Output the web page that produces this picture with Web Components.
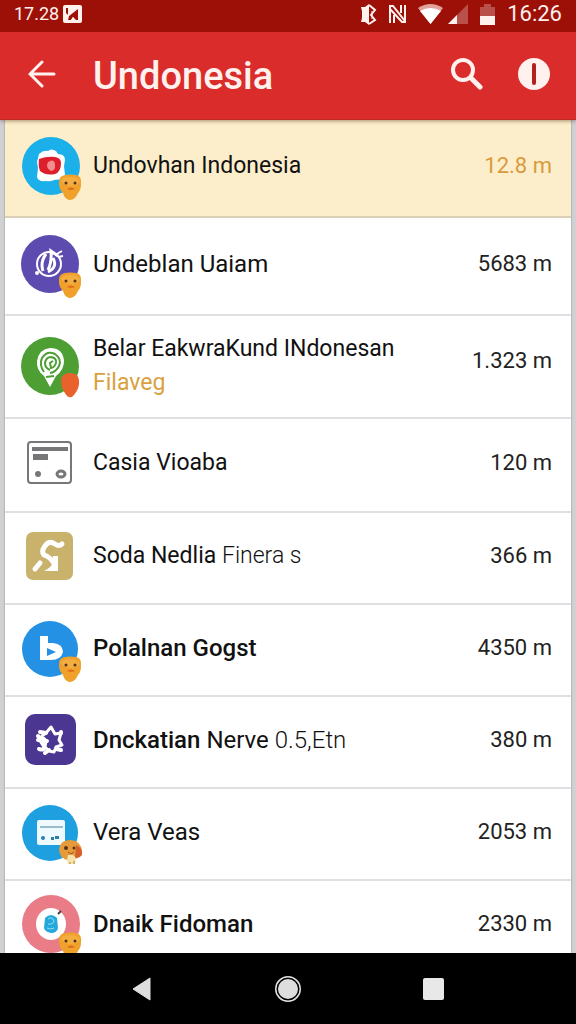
<!DOCTYPE html>
<html lang="id">
<head>
<meta charset="utf-8">
<meta name="viewport" content="width=device-width, initial-scale=1">
<title>Undonesia</title>
<style>
  body {
    margin: 0;
    font-family: Roboto, "Liberation Sans", sans-serif;
  }
</style>
</head>
<body>
<app-screen>
  <status-bar slot="top">
    <span slot="start">17.28</span>
    <span slot="end">16:26</span>
  </status-bar>
  <app-bar slot="top">Undonesia</app-bar>

  <list-row icon="map" badge="duck" highlight roomy compact>
    Undovhan Indonesia
    <span slot="amount">12.8 m</span>
  </list-row>
  <list-row icon="note" badge="duck" roomy>
    Undeblan Uaiam
    <span slot="amount">5683 m</span>
  </list-row>
  <list-row icon="pin" badge="drop" two-line compact>
    Belar EakwraKund INdonesan
    <span slot="subtitle">Filaveg</span>
    <span slot="amount">1.323 m</span>
  </list-row>
  <list-row icon="card" medium compact>
    Casia Vioaba
    <span slot="amount">120 m</span>
  </list-row>
  <list-row icon="soda" compact>
    Soda Nedlia <span class="light">Finera s</span>
    <span slot="amount">366 m</span>
  </list-row>
  <list-row icon="play" badge="duck" strong>
    Polalnan Gogst
    <span slot="amount">4350 m</span>
  </list-row>
  <list-row icon="star" strong>
    Dnckatian <span class="regular">Nerve</span> <span class="light">0.5,Etn</span>
    <span slot="amount">380 m</span>
  </list-row>
  <list-row icon="window" badge="dog">
    Vera Veas
    <span slot="amount">2053 m</span>
  </list-row>
  <list-row icon="donut" badge="duck" strong>
    Dnaik Fidoman
    <span slot="amount">2330 m</span>
  </list-row>

  <nav-bar slot="bottom"></nav-bar>
</app-screen>

<script>
class AppScreen extends HTMLElement {
  constructor() {
    super();
    this.attachShadow({ mode: 'open' });
    this.shadowRoot.innerHTML = `
      <style>
        :host {
          display: flex;
          flex-direction: column;
          height: 100vh;
          background: #d0d1d3;
        }
        header {
          z-index: 1;
          box-shadow: 0 1px 4px rgba(60, 20, 0, 0.45);
        }
        main {
          flex: 1;
          min-height: 0;
          overflow: hidden;
          margin: 0 5px;
          background: #fff;
          box-shadow: 0 0 1px 1px #b9babb;
        }
        footer {
          z-index: 1;
        }
      </style>
      <header><slot name="top"></slot></header>
      <main role="list"><slot></slot></main>
      <footer><slot name="bottom"></slot></footer>
    `;
  }
}

class StatusBar extends HTMLElement {
  constructor() {
    super();
    this.attachShadow({ mode: 'open' });
    this.shadowRoot.innerHTML = `
      <style>
        :host {
          display: flex;
          align-items: center;
          justify-content: space-between;
          height: 32px;
          padding: 0 14px 4px;
          box-sizing: border-box;
          background: #9c1007;
          color: #fff1ee;
          line-height: 24px;
        }
        div {
          display: flex;
          align-items: center;
        }
        .start {
          gap: 4px;
          font-size: 18px;
        }
        .end {
          gap: 12px;
          font-size: 22px;
        }
        .signal {
          display: flex;
          align-items: center;
          gap: 5px;
        }
        svg {
          display: block;
        }
      </style>
      <div class="start">
        <slot name="start"></slot>
        <svg width="19" height="18" viewBox="0 0 19 18">
          <rect width="19" height="18" rx="2" fill="#fff1ee"/>
          <path d="M3 3 5 3 5 10 3 8zM6 11 15 4V15H12L10 12 8 15H5z" fill="#9c1007"/>
          <path d="m8 15 2-3 3 3z" fill="#fff1ee"/>
        </svg>
      </div>
      <div class="end">
        <svg width="16" height="21" viewBox="0 0 16 21">
          <path d="M0 3h4l4-3v21l-4-3H0l1-4V7z" fill="#fff1ee"/>
          <path d="m8 1 6 5-4 5 4 5-6 4" fill="none" stroke="#fff1ee" stroke-width="2"/>
          <path d="M11 7v8" stroke="#fff1ee" stroke-width="1"/>
        </svg>
        <svg width="17" height="18" viewBox="0 0 17 18" fill="none" stroke="#fff1ee" stroke-width="2">
          <path d="M1 18V1h3l12 15V0M1 4l12 13h3M5 18v-8M12 0v8"/>
        </svg>
        <span class="signal">
          <svg width="25" height="20" viewBox="0 0 25 20">
            <path d="M12.500 20 0 4Q12.500-4 25 4z" fill="#e2a29b"/>
            <path d="M12.500 20 2 7Q12.500 1 23 7z" fill="#fff"/>
          </svg>
          <svg width="20" height="20" viewBox="0 0 20 20">
            <path d="M0 20 20 0v20z" fill="#b9504a"/>
            <path d="M0 20 9 11v9z" fill="#fff1ee"/>
          </svg>
        </span>
        <svg width="15" height="21" viewBox="0 0 15 21">
          <path d="M0 3h4V0h7v3h4v9H0z" fill="#b9504a"/>
          <path d="M0 12h15v9H0z" fill="#fff1ee"/>
        </svg>
        <slot name="end"></slot>
      </div>
    `;
  }
}

class AppBar extends HTMLElement {
  constructor() {
    super();
    this.attachShadow({ mode: 'open' });
    this.shadowRoot.innerHTML = `
      <style>
        :host {
          display: flex;
          align-items: center;
          height: 88px;
          box-sizing: border-box;
          padding: 0 18px 4px;
          background: #da2c2a;
          border-bottom: 1px solid #c22a22;
          color: #fff1ee;
        }
        h1 {
          flex: 1;
          margin: 0 0 0 27px;
          font-size: 38px;
          font-weight: 500;
          line-height: 44px;
          padding-top: 4px;
        }
        button {
          display: flex;
          align-items: center;
          justify-content: center;
          width: 48px;
          height: 48px;
          padding: 0;
          border: 0;
          background: none;
          color: inherit;
        }
        .actions {
          display: flex;
          gap: 19px;
        }
      </style>
      <button aria-label="Back">
        <svg width="28" height="28" viewBox="0 0 28 28" fill="none" stroke="currentColor" stroke-width="3" stroke-linecap="round">
          <path d="M26 14H2M14 2 2 14l12 12"/>
        </svg>
      </button>
      <h1><slot></slot></h1>
      <div class="actions">
        <button aria-label="Search">
          <svg width="32" height="32" viewBox="0 0 32 32" fill="none" stroke="currentColor">
            <circle cx="12" cy="12" r="10" stroke-width="4"/>
            <path d="m20 20 9 9" stroke-width="5" stroke-linecap="round"/>
          </svg>
        </button>
        <button aria-label="Info">
          <svg width="32" height="32" viewBox="0 0 32 32">
            <circle cx="16" cy="16" r="16" fill="currentColor"/>
            <rect x="14" y="5" width="4" height="22" rx="2" fill="#b3211f"/>
          </svg>
        </button>
      </div>
    `;
  }
}

// All avatars are drawn on a 60x60 grid, badges overlap the lower right corner.
const ICONS = {
  map: `
    <circle cx="31" cy="30" r="29" fill="#1bb0ea"/>
    <path d="M19 18q4-4 9-3 3-3 8 0l2 3q7 0 7 6l-1 6 1 9-2 5q-5-1-9 0-4 2-8 1-8 1-9-4l1-9-1-6z" fill="#fff"/>
    <path d="M19 23q8-3 16-2 6 1 6 6 0 9-6 11-9 2-15-3-2-5-1-12z" fill="#dc1f2a"/>
    <path d="M28 26q6-4 7 2 1 7-4 7-6-3-3-9z" fill="#f58d8f"/>`,
  note: `
    <circle cx="30" cy="30" r="29" fill="#5d4bb0"/>
    <g fill="none" stroke="#fff">
      <circle cx="29" cy="30" r="12" stroke-width="2"/>
      <path d="M26 20q-6 8-3 17M28 36q4-8 3-19l7 5M33 24q5 9-5 14" stroke-width="3"/>
      <path d="m35 21 7-4m-4 6 5-1" stroke-width="2"/>
    </g>
    <circle cx="17" cy="39" r="2" fill="#fff"/>`,
  pin: `
    <circle cx="30" cy="30" r="29" fill="#4d9f34"/>
    <path d="M30 51 24 40Q16 34 17 25 19 13 30 12q13 0 14 13 0 9-8 15z" fill="#fff"/>
    <g fill="none" stroke="#4d9f34" stroke-width="2">
      <path d="M24 36q-5-7-2-14 5-8 13-4 7 5 4 12-3 6-9 7"/>
      <path d="M30 34q-5-2-5-7 1-6 6-6 6 1 5 6-2 5-5 5l-1-5 3-2"/>
      <path d="m26 41 8-1"/>
    </g>`,
  card: `
    <rect x="8" y="9" width="43" height="41" rx="3" fill="#fff" stroke="#77777a" stroke-width="2"/>
    <path d="M12 14h36v4H12zM13 21h15v6H13z" fill="#77777a"/>
    <circle cx="18" cy="41" r="3" fill="#77777a"/>
    <ellipse cx="41" cy="41" rx="4" ry="3" fill="none" stroke="#77777a" stroke-width="3"/>`,
  soda: `
    <rect x="6" y="6" width="47" height="48" rx="7" fill="#c8b26c"/>
    <path d="M42 18q-3 3-7 0-6-4-10 2-4 5-1 9 6 2 9 7" fill="none" stroke="#fff" stroke-width="5" stroke-linecap="round" stroke-linejoin="round"/>
    <path d="M33 30h5v15H24q8-4 9-9z" fill="#fff"/>
    <path d="m15 43 5-6" stroke="#fff" stroke-width="5" stroke-linecap="round"/>`,
  play: `
    <circle cx="30" cy="31" r="28" fill="#2491e5"/>
    <path d="M20 18h8v7h5q10 1 10 9-2 8-12 8H20z" fill="#fff"/>
    <path d="m27 30 9 4-9 4z" fill="#2491e5"/>`,
  star: `
    <rect x="5" y="4" width="51" height="51" rx="10" fill="#4b3791"/>
    <path d="m26 23 5-6 4 7 6-1-2 7 3 5-6 2-2 5-5-1-4-4 1-6-4-5z" fill="none" stroke="#fff" stroke-width="3" stroke-linejoin="round"/>
    <path d="m26 23-6-1m7 9-9-1m2 0 4 6q1 5-5 3M41 23v-1m-5 17 5 1m-12 0-4 3M18 26l3 3" fill="none" stroke="#fff" stroke-width="4" stroke-linecap="round"/>`,
  window: `
    <circle cx="30" cy="31" r="28" fill="#1d9fe0"/>
    <rect x="17" y="18" width="28" height="25" rx="2" fill="#effaff"/>
    <path d="M20 25h23" stroke="#477f9b" stroke-width="1"/>
    <circle cx="23" cy="36" r="2" fill="#287fae"/>
    <path d="M31 35h3v3h-3zM35 34h4v3h-4z" fill="#287fae"/>`,
  donut: `
    <circle cx="31" cy="30" r="29" fill="#e97c86"/>
    <ellipse cx="31" cy="30" rx="15" ry="16" fill="#fff"/>
    <path d="M25 24q6-6 12 0l1 10q-1 5-7 5-6-1-7-5z" fill="#25a9dd"/>
    <path d="M28 25q4-3 6 2-1 4-6 3m-1 4q4 2 7 0" fill="none" stroke="#96dcf3" stroke-width="1"/>
    <path d="m38 20 3-3" stroke="#444" stroke-width="2"/>`
};

const BADGES = {
  duck: `
    <path d="M39 48q-1-8 6-9 5-1 11 0 6 1 5 9 0 6-3 9-3 7-8 7t-7-7q-4-4-4-9z" fill="#efa12c"/>
    <path d="M41 45q1-4 9-4t10 5q-2 4-9 4-7 0-10-5z" fill="#f3ae3f"/>
    <circle cx="46" cy="47" r="1.500" fill="#55311a"/>
    <circle cx="55" cy="47" r="1.500" fill="#55311a"/>
    <path d="M47 53q4-3 8 0-4 2-8 0z" fill="#df6c1d"/>`,
  drop: `<path d="M41 44q1-7 9-7t9 7q1 8-5 15-3 4-7 1-6-7-6-16z" fill="#e9622b"/>`,
  dog: `
    <path d="M39 47q1-9 12-9 10 1 11 11-1 6-7 8l-6 2q-10-3-10-12z" fill="#e69b3a"/>
    <path d="M56 43q7 3 6 10-3 4-7 3z" fill="#d65e2a"/>
    <path d="M48 53q8-1 8 5l-1 4h-7l-1-4z" fill="#f4e3ae"/>
    <circle cx="46" cy="46" r="2" fill="#55311a"/>
    <circle cx="54" cy="46" r="1.500" fill="#55311a"/>
    <path d="m48 50 3 2 3-2" fill="none" stroke="#a4521e" stroke-width="1"/>
    <path d="M50 60v2m4-3v3" stroke="#b58231" stroke-width="1"/>`
};

class ListRow extends HTMLElement {
  constructor() {
    super();
    this.attachShadow({ mode: 'open' });
  }

  connectedCallback() {
    this.setAttribute('role', 'listitem');
    this.render();
  }

  render() {
    const badge = BADGES[this.getAttribute('badge')] || '';
    this.shadowRoot.innerHTML = `
      <style>
        :host {
          display: flex;
          align-items: center;
          gap: 13px;
          min-height: 92px;
          box-sizing: border-box;
          padding: 0 19px 4px 15px;
          background: #fff;
          border-bottom: 2px solid #dfe0e2;
          color: #111;
          font-weight: 400;
          font-size: 24px;
          line-height: 34px;
        }
        :host([medium]) {
          min-height: 94px;
        }
        :host([roomy]) {
          min-height: 98px;
        }
        :host([two-line]) {
          padding-top: 16px;
          padding-bottom: 17px;
        }
        :host([compact]) {
          font-size: 23px;
        }
        :host([strong]) {
          font-weight: 500;
        }
        :host([highlight]) {
          background: #fdeecb;
          border-color: #dccfb8;
        }
        svg {
          flex: none;
          overflow: visible;
        }
        .text {
          flex: 1;
          min-width: 0;
        }
        ::slotted(.regular) {
          font-weight: 400;
        }
        ::slotted(.light) {
          font-weight: 300;
        }
        ::slotted([slot="subtitle"]) {
          display: block;
          color: #d9a13d;
        }
        .amount {
          color: #222;
          font-size: 22px;
          font-weight: 400;
          white-space: nowrap;
        }
        :host([highlight]) .amount {
          color: #d99a3c;
        }
        :host([two-line]) .amount {
          padding-bottom: 10px;
        }
      </style>
      <svg width="60" height="60" viewBox="0 0 60 60" aria-hidden="true">${ICONS[this.getAttribute('icon')]}${badge}</svg>
      <div class="text"><slot></slot><slot name="subtitle"></slot></div>
      <div class="amount"><slot name="amount"></slot></div>
    `;
  }
}

class NavBar extends HTMLElement {
  constructor() {
    super();
    this.attachShadow({ mode: 'open' });
    this.shadowRoot.innerHTML = `
      <style>
        :host {
          display: flex;
          align-items: center;
          justify-content: space-around;
          height: 71px;
          padding: 0 12%;
          background: #000;
        }
        button {
          display: flex;
          align-items: center;
          justify-content: center;
          width: 48px;
          height: 48px;
          padding: 0;
          border: 0;
          background: none;
        }
      </style>
      <button aria-label="Back">
        <svg width="20" height="24" viewBox="0 0 20 24"><path d="M1 12 18 1v22z" fill="#dedede" stroke="#dedede" stroke-width="1" stroke-linejoin="round"/></svg>
      </button>
      <button aria-label="Home">
        <svg width="28" height="28" viewBox="0 0 28 28"><circle cx="14" cy="14" r="12" fill="none" stroke="#dedede" stroke-width="2"/><circle cx="14" cy="14" r="10" fill="#dedede"/><circle cx="14" cy="14" r="11" fill="none" stroke="#000" stroke-width="1"/></svg>
      </button>
      <button aria-label="Recent apps">
        <svg width="21" height="22" viewBox="0 0 21 22"><rect width="21" height="22" rx="2" fill="#e8e8e8"/></svg>
      </button>
    `;
  }
}

customElements.define('app-screen', AppScreen);
customElements.define('status-bar', StatusBar);
customElements.define('app-bar', AppBar);
customElements.define('list-row', ListRow);
customElements.define('nav-bar', NavBar);
</script>
</body>
</html>
